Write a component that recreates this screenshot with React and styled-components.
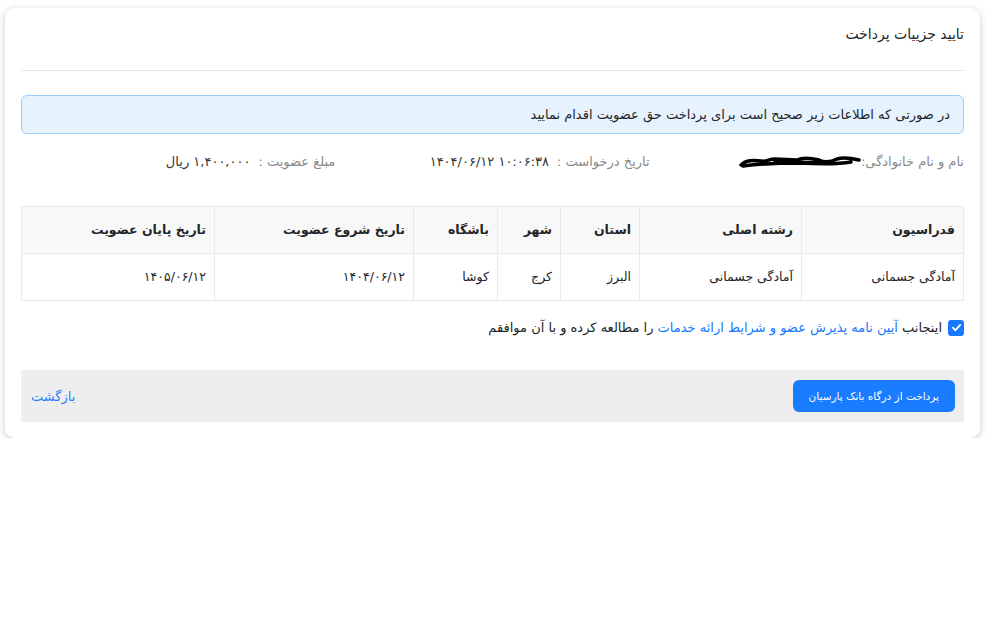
import React from "react";
import styled, { createGlobalStyle } from "styled-components";

const GlobalStyle = createGlobalStyle`
  body {
    margin: 0;
    background: #ffffff;
    font-family: "DejaVu Sans", "Noto Sans", sans-serif;
    color: #212529;
  }
`;

const Page = styled.div`
  padding: 8px 13px 0 5px;
  direction: rtl;
`;

const Card = styled.div`
  background: #fff;
  border-radius: 10px;
  box-shadow: 0 2px 7px rgba(60, 100, 80, 0.32);
  padding: 0 16px 16px 16px;
`;

const Title = styled.div`
  font-size: 14px;
  line-height: 16px;
  padding: 18px 0 28px;
  border-bottom: 1px solid #e6e6e6;
`;

const Alert = styled.div`
  margin-top: 24px;
  background: #e6f3fe;
  border: 1px solid #9fcdf7;
  border-radius: 6px;
  padding: 10px 13px;
  line-height: 17px;
  font-size: 13px;
`;

const InfoRow = styled.div`
  display: grid;
  grid-template-columns: repeat(3, 1fr);
  margin-top: 16px;
  font-size: 13px;
  height: 22px;
  align-items: center;
`;

const InfoItem = styled.div`
  display: flex;
  align-items: center;
  gap: ${(p) => (p.tight ? 0 : 8)}px;
`;

const Label = styled.span`
  color: #8a8a8a;
`;

const Value = styled.span`
  color: #333;
  direction: ${(p) => (p.ltr ? "ltr" : "rtl")};
  unicode-bidi: isolate;
`;

const Table = styled.table`
  width: 100%;
  margin-top: 34px;
  border-collapse: collapse;
  table-layout: fixed;
  font-size: 12.5px;
  border: 1px solid #e9e9e9;
`;

const Th = styled.th`
  box-sizing: border-box;
  background: #f8f8f8;
  font-weight: bold;
  text-align: right;
  padding: 0 8px;
  height: 46.5px;
  border: 1px solid #e9e9e9;
  width: ${(p) => p.w}px;
`;

const Td = styled.td`
  text-align: right;
  padding: 0 8px;
  height: 46.5px;
  border: 1px solid #e9e9e9;
`;

const Agree = styled.label`
  display: flex;
  align-items: center;
  gap: 6px;
  margin-top: 18px;
  line-height: 17px;
  font-size: 13px;
`;

const Check = styled.span`
  width: 16px;
  height: 16px;
  border-radius: 3px;
  background: #1677ff;
  display: inline-flex;
  align-items: center;
  justify-content: center;
`;

const Link = styled.a`
  color: #1677ff;
  text-decoration: none;
`;

const Footer = styled.div`
  margin-top: 34px;
  background: #eeeeee;
  height: 52px;
  display: flex;
  align-items: center;
  justify-content: space-between;
  padding: 0 9px 0 10px;
`;

const PayButton = styled.button`
  background: #1a7cff;
  color: #fff;
  border: none;
  border-radius: 6px;
  height: 32px;
  padding: 0 16px;
  font-family: inherit;
  font-size: 10.5px;
  font-weight: normal;
`;

const BackLink = styled.a`
  color: #2a7fff;
  font-size: 13px;
`;

const headers = [
  ["فدراسیون", 162],
  ["رشته اصلی", 162],
  ["استان", 79],
  ["شهر", 63],
  ["باشگاه", 84],
  ["تاریخ شروع عضویت", 199],
  ["تاریخ پایان عضویت", 193],
];

const row = [
  "آمادگی جسمانی",
  "آمادگی جسمانی",
  "البرز",
  "کرج",
  "کوشا",
  "۱۴۰۴/۰۶/۱۲",
  "۱۴۰۵/۰۶/۱۲",
];

const Scribble = () => (
  <svg width="122" height="16" viewBox="0 0 122 16">
    <path
      d="M2 12 C6 7 14 7 22 8 C28 9 30 6 36 6 L58 7 C64 4 72 5 80 7 C86 10 92 9 98 6 C104 4 112 5 120 7 M4 13 C20 11 40 10 60 10 C78 11 96 12 112 9 M36 9 C52 8 70 11 94 9"
      stroke="#000"
      strokeWidth="3.5"
      fill="none"
      strokeLinecap="round"
    />
  </svg>
);

export default function App() {
  return (
    <>
      <GlobalStyle />
      <Page>
        <Card>
          <Title>تایید جزییات پرداخت</Title>
          <Alert>در صورتی که اطلاعات زیر صحیح است برای پرداخت حق عضویت اقدام نمایید</Alert>
          <InfoRow>
            <InfoItem tight>
              <Label>نام و نام خانوادگی:</Label>
              <Scribble />
            </InfoItem>
            <InfoItem>
              <Label>تاریخ درخواست :</Label>
              <Value ltr>۱۴۰۴/۰۶/۱۲ ۱۰:۰۶:۳۸</Value>
            </InfoItem>
            <InfoItem>
              <Label>مبلغ عضویت :</Label>
              <Value>۱,۴۰۰,۰۰۰ ریال</Value>
            </InfoItem>
          </InfoRow>
          <Table>
            <thead>
              <tr>
                {headers.map(([h, w]) => (
                  <Th key={h} w={w}>{h}</Th>
                ))}
              </tr>
            </thead>
            <tbody>
              <tr>
                {row.map((c, i) => (
                  <Td key={i}>{c}</Td>
                ))}
              </tr>
            </tbody>
          </Table>
          <Agree>
            <Check>
              <svg width="11" height="11" viewBox="0 0 12 12">
                <path d="M2 6.2 L4.8 9 L10 3.2" stroke="#fff" strokeWidth="2" fill="none" strokeLinecap="round" strokeLinejoin="round" />
              </svg>
            </Check>
            <span>
              اینجانب <Link href="#">آیین نامه پذیرش عضو و شرایط ارائه خدمات</Link> را مطالعه کرده و با آن موافقم
            </span>
          </Agree>
          <Footer>
            <PayButton>پرداخت از درگاه بانک پارسیان</PayButton>
            <BackLink>بازگشت</BackLink>
          </Footer>
        </Card>
      </Page>
    </>
  );
}
